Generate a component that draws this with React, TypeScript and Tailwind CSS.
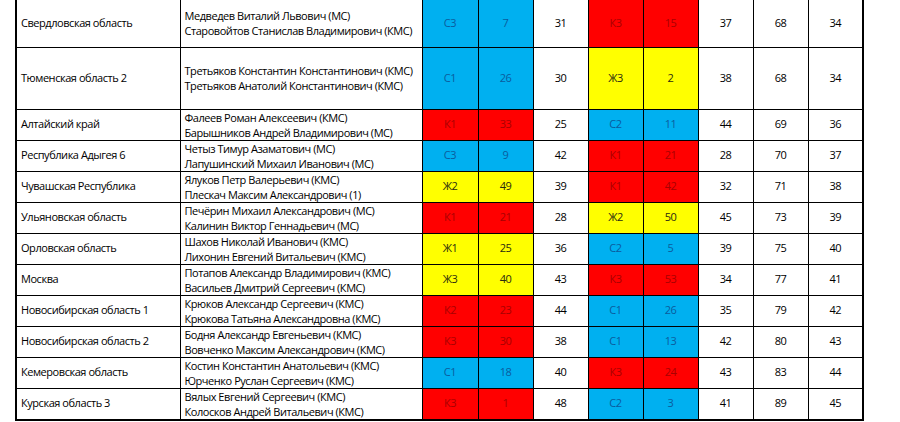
import React from "react";

type C = "b" | "r" | "y";
type Row = {
  h: string;
  region: string;
  n1: string;
  n2: string;
  c1: C;
  l1: string;
  v1: string;
  p1: string;
  c2: C;
  l2: string;
  v2: string;
  p2: string;
  sum: string;
  place: string;
};

const rows: Row[] = [
  { h: "h-[47px]", region: "Свердловская область", n1: "Медведев Виталий Львович (МС)", n2: "Старовойтов Станислав Владимирович (КМС)", c1: "b", l1: "С3", v1: "7", p1: "31", c2: "r", l2: "К3", v2: "15", p2: "37", sum: "68", place: "34" },
  { h: "h-[62px]", region: "Тюменская область 2", n1: "Третьяков Константин Константинович (КМС)", n2: "Третьяков Анатолий Константинович (КМС)", c1: "b", l1: "С1", v1: "26", p1: "30", c2: "y", l2: "Ж3", v2: "2", p2: "38", sum: "68", place: "34" },
  { h: "h-[31px]", region: "Алтайский край", n1: "Фалеев Роман Алексеевич (КМС)", n2: "Барышников Андрей Владимирович (МС)", c1: "r", l1: "К1", v1: "33", p1: "25", c2: "b", l2: "С2", v2: "11", p2: "44", sum: "69", place: "36" },
  { h: "h-[31px]", region: "Республика Адыгея 6", n1: "Четыз Тимур Азаматович (МС)", n2: "Лапушинский Михаил Иванович (МС)", c1: "b", l1: "С3", v1: "9", p1: "42", c2: "r", l2: "К1", v2: "21", p2: "28", sum: "70", place: "37" },
  { h: "h-[31px]", region: "Чувашская Республика", n1: "Ялуков Петр Валерьевич (КМС)", n2: "Плескач Максим Александрович (1)", c1: "y", l1: "Ж2", v1: "49", p1: "39", c2: "r", l2: "К1", v2: "42", p2: "32", sum: "71", place: "38" },
  { h: "h-[31px]", region: "Ульяновская область", n1: "Печёрин Михаил Александрович (МС)", n2: "Калинин Виктор Геннадьевич (МС)", c1: "r", l1: "К1", v1: "21", p1: "28", c2: "y", l2: "Ж2", v2: "50", p2: "45", sum: "73", place: "39" },
  { h: "h-[31px]", region: "Орловская область", n1: "Шахов Николай Иванович (КМС)", n2: "Лихонин Евгений Витальевич (КМС)", c1: "y", l1: "Ж1", v1: "25", p1: "36", c2: "b", l2: "С2", v2: "5", p2: "39", sum: "75", place: "40" },
  { h: "h-[31px]", region: "Москва", n1: "Потапов Александр Владимирович (КМС)", n2: "Васильев Дмитрий Сергеевич (КМС)", c1: "y", l1: "Ж3", v1: "40", p1: "43", c2: "r", l2: "К3", v2: "53", p2: "34", sum: "77", place: "41" },
  { h: "h-[31px]", region: "Новосибирская область 1", n1: "Крюков Александр Сергеевич (КМС)", n2: "Крюкова Татьяна Александровна (КМС)", c1: "r", l1: "К2", v1: "23", p1: "44", c2: "b", l2: "С1", v2: "26", p2: "35", sum: "79", place: "42" },
  { h: "h-[31px]", region: "Новосибирская область 2", n1: "Бодня Александр Евгеньевич (КМС)", n2: "Вовченко Максим Александрович (КМС)", c1: "r", l1: "К3", v1: "30", p1: "38", c2: "b", l2: "С1", v2: "13", p2: "42", sum: "80", place: "43" },
  { h: "h-[31px]", region: "Кемеровская область", n1: "Костин Константин Анатольевич (КМС)", n2: "Юрченко Руслан Сергеевич (КМС)", c1: "b", l1: "С1", v1: "18", p1: "40", c2: "r", l2: "К3", v2: "24", p2: "43", sum: "83", place: "44" },
  { h: "h-[31px]", region: "Курская область 3", n1: "Вялых Евгений Сергеевич (КМС)", n2: "Колосков Андрей Витальевич (КМС)", c1: "r", l1: "К3", v1: "1", p1: "48", c2: "b", l2: "С2", v2: "3", p2: "41", sum: "89", place: "45" },
];

const colorCls: Record<C, string> = {
  b: "bg-[#00b0f0] text-[#0b5c9e]",
  r: "bg-[#ff0000] text-[#a80000]",
  y: "bg-[#ffff00] text-[#2a2a10]",
};

const cell = "border border-black text-center align-middle p-0";

export default function App() {
  return (
    <div
      className="w-[900px] h-[422px] bg-white overflow-hidden pl-[15px]"
      style={{ fontFamily: '"Open Sans", "Noto Sans", sans-serif' }}
    >
      <table className="table-fixed border-collapse w-[847px] text-[11px] tracking-[-0.45px] font-medium text-black border-b-2 border-l-2 border-r-2 border-black">
        <colgroup>
          <col className="w-[164px]" />
          <col className="w-[242px]" />
          <col className="w-[56px]" />
          <col className="w-[55px]" />
          <col className="w-[55px]" />
          <col className="w-[55px]" />
          <col className="w-[55px]" />
          <col className="w-[55px]" />
          <col className="w-[55px]" />
          <col className="w-[55px]" />
        </colgroup>
        <tbody>
          {rows.map((r, i) => (
            <tr key={i} className={r.h}>
              <td className={`border border-black border-l-2 align-middle pl-[4px] pr-0 py-0 whitespace-nowrap ${i === 0 ? "border-t-0" : ""}`}>
                {r.region}
              </td>
              <td className={`border border-black align-middle pl-[4px] pr-0 py-0 whitespace-nowrap leading-[15px] ${i === 0 ? "border-t-0" : ""}`}>
                <div>{r.n1}</div>
                <div>{r.n2}</div>
              </td>
              <td className={`${cell} ${colorCls[r.c1]} ${i === 0 ? "border-t-0" : ""}`}>{r.l1}</td>
              <td className={`${cell} ${colorCls[r.c1]} ${i === 0 ? "border-t-0" : ""}`}>{r.v1}</td>
              <td className={`${cell} ${i === 0 ? "border-t-0" : ""}`}>{r.p1}</td>
              <td className={`${cell} ${colorCls[r.c2]} ${i === 0 ? "border-t-0" : ""}`}>{r.l2}</td>
              <td className={`${cell} ${colorCls[r.c2]} ${i === 0 ? "border-t-0" : ""}`}>{r.v2}</td>
              <td className={`${cell} ${i === 0 ? "border-t-0" : ""}`}>{r.p2}</td>
              <td className={`${cell} ${i === 0 ? "border-t-0" : ""}`}>{r.sum}</td>
              <td className={`${cell} border-r-2 ${i === 0 ? "border-t-0" : ""}`}>{r.place}</td>
            </tr>
          ))}
        </tbody>
      </table>
    </div>
  );
}
